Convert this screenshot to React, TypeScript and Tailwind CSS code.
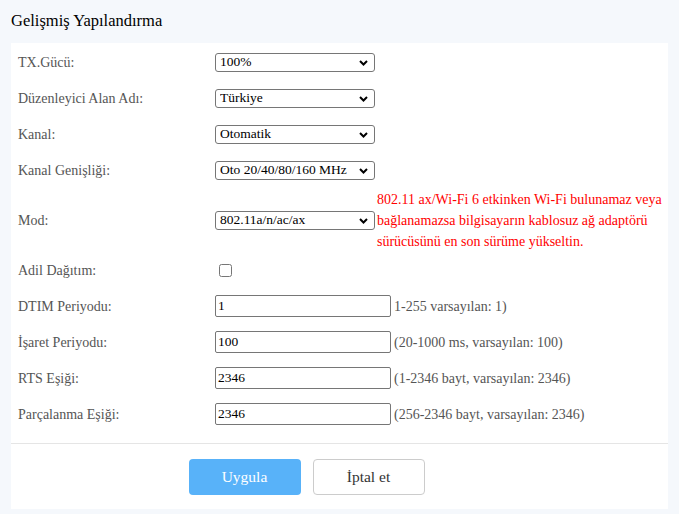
import React, { useState } from 'react';

const selectRows = [
  { label: 'TX.Gücü:', value: '100%', options: ['100%', '75%', '50%', '25%'] },
  { label: 'Düzenleyici Alan Adı:', value: 'Türkiye', options: ['Türkiye'] },
  { label: 'Kanal:', value: 'Otomatik', options: ['Otomatik', '36', '40', '44', '48'] },
  { label: 'Kanal Genişliği:', value: 'Oto 20/40/80/160 MHz', options: ['Oto 20/40/80/160 MHz', '20 MHz', '40 MHz', '80 MHz'] },
];

const inputRows = [
  { label: 'DTIM Periyodu:', value: '1', hint: '1-255 varsayılan: 1)' },
  { label: 'İşaret Periyodu:', value: '100', hint: '(20-1000 ms, varsayılan: 100)' },
  { label: 'RTS Eşiği:', value: '2346', hint: '(1-2346 bayt, varsayılan: 2346)' },
  { label: 'Parçalanma Eşiği:', value: '2346', hint: '(256-2346 bayt, varsayılan: 2346)' },
];

const Select = ({ value, options }: { value: string; options: string[] }) => (
  <div className="relative shrink-0 w-[160px] h-[19px]">
    <select
      defaultValue={value}
      className="block appearance-none w-full h-full border border-[#767676] rounded-[3px] bg-white pl-[4px] pr-[20px] text-[13.5px] leading-none text-black outline-none"
    >
      {options.map(o => (
        <option key={o}>{o}</option>
      ))}
    </select>
    <svg
      className="pointer-events-none absolute right-[7px] top-[7px]"
      width="9"
      height="6"
      viewBox="0 0 9 6"
    >
      <path d="M1 1l3.5 3.5L8 1" stroke="#000" strokeWidth="2" fill="none" />
    </svg>
  </div>
);

const Row = ({ label, children, tall }: { label: string; children: React.ReactNode; tall?: boolean }) => (
  <div className={`flex items-center ${tall ? 'h-[64px]' : 'h-[36px]'}`}>
    <div className="w-[197px] shrink-0 text-[14px] text-[#555]">{label}</div>
    {children}
  </div>
);

export default function App() {
  const [fair, setFair] = useState(false);

  return (
    <div className="min-h-[514px] bg-[#f5f8fc] px-[11px] pb-[6px] font-['Liberation_Serif','Times_New_Roman',serif]">
      <div className="h-[43px] flex items-center text-[16.5px] text-black">Gelişmiş Yapılandırma</div>

      <div className="bg-white">
        <div className="pt-[1px] pl-[7px] pb-[11px]">
          {selectRows.map(r => (
            <Row key={r.label} label={r.label}>
              <Select value={r.value} options={r.options} />
            </Row>
          ))}

          <Row label="Mod:" tall>
            <Select value="802.11a/n/ac/ax" options={['802.11a/n/ac/ax', '802.11a/n/ac', '802.11a/n']} />
            <p className="ml-[2px] w-[290px] text-[14px] leading-[21px] text-[#ff0000]">
              802.11 ax/Wi-Fi 6 etkinken Wi-Fi bulunamaz veya bağlanamazsa bilgisayarın kablosuz ağ adaptörü
              sürücüsünü en son sürüme yükseltin.
            </p>
          </Row>

          <Row label="Adil Dağıtım:">
            <input
              type="checkbox"
              checked={fair}
              onChange={e => setFair(e.target.checked)}
              className="ml-[4px] w-[13px] h-[13px] m-0"
            />
          </Row>

          {inputRows.map(r => (
            <Row key={r.label} label={r.label}>
              <input
                type="text"
                defaultValue={r.value}
                className="block w-[176px] h-[22px] border border-[#767676] rounded-[2px] px-[2px] text-[13.5px] text-black outline-none"
              />
              <span className="ml-[3px] text-[14px] text-[#555]">{r.hint}</span>
            </Row>
          ))}
        </div>

        <div className="border-t border-[#e5e5e5] h-[66px] flex items-center justify-center gap-[12px] pr-[66px]">
          <button className="w-[112px] h-[36px] rounded-[4px] bg-[#58b2f9] text-white text-[15.5px]">Uygula</button>
          <button className="w-[112px] h-[36px] rounded-[4px] border border-[#cccccc] bg-white text-[#333] text-[15.5px]">
            İptal et
          </button>
        </div>
      </div>
    </div>
  );
}
